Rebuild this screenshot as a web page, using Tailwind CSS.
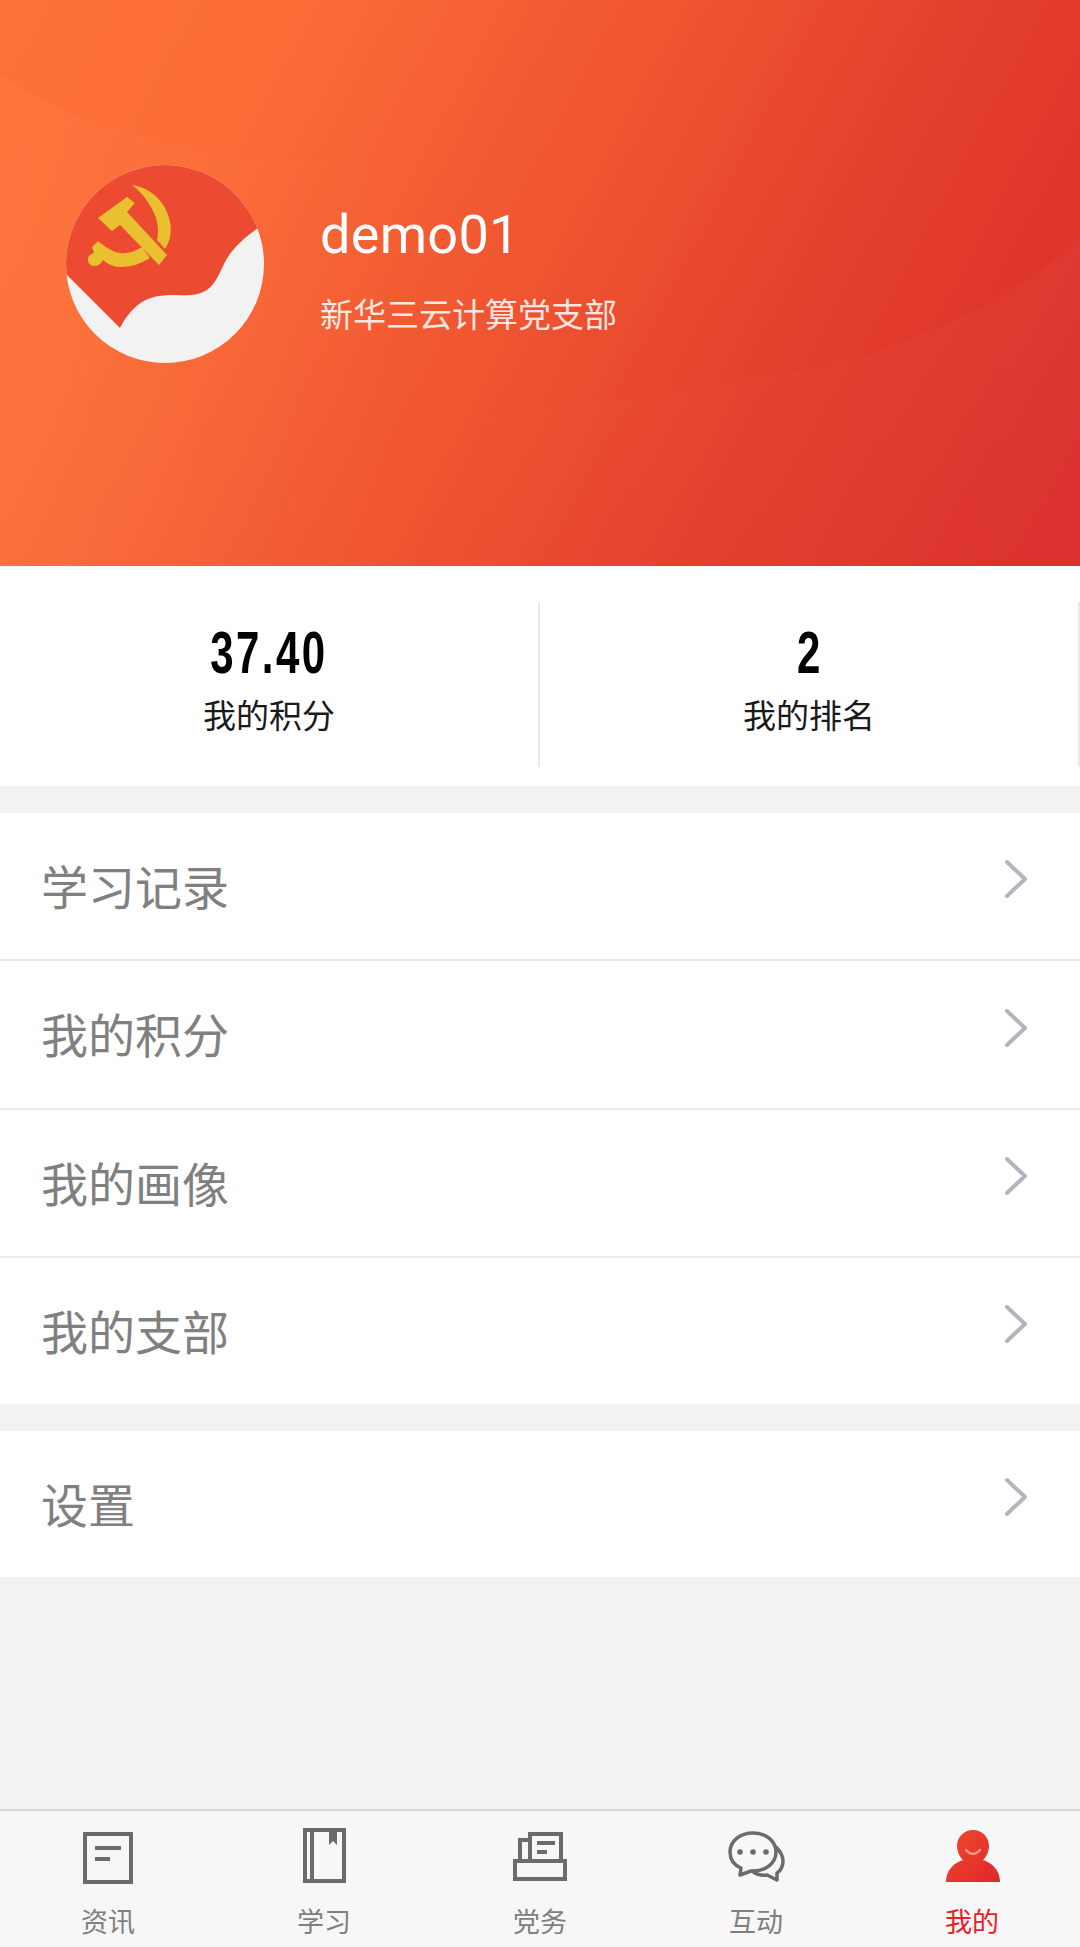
<!DOCTYPE html>
<html lang="zh">
<head>
<meta charset="utf-8">
<script src="https://cdn.jsdelivr.net/npm/@tailwindcss/browser@4"></script>
</head>
<body class="m-0">
<div class="w-[1080px] h-[1947px] flex flex-col bg-[#f2f2f2] overflow-hidden font-['Roboto','Noto_Sans_CJK_SC',sans-serif]">
  <!-- hero -->
  <header class="relative h-[566px] shrink-0 overflow-hidden bg-[linear-gradient(118deg,#fe7238_0%,#fc6d37_20%,#ee5430_50%,#e23c2c_75%,#d92b2a_100%)]">
    <svg class="absolute inset-0" width="1080" height="566" viewBox="0 0 1080 566" fill="none" aria-hidden="true">
      <defs>
        <linearGradient id="w1" x1="0" y1="0" x2="1" y2="0"><stop offset="0" stop-color="#fff" stop-opacity="0.03"/><stop offset="1" stop-color="#fff" stop-opacity="0"/></linearGradient>
        <linearGradient id="w2" x1="0" y1="0" x2="1" y2="0"><stop offset="0" stop-color="#fff" stop-opacity="0"/><stop offset="1" stop-color="#fff" stop-opacity="0.025"/></linearGradient>
      </defs>
      <path d="M0 75C60 115 120 135 172 145C260 165 320 160 420 160V566H0Z" fill="url(#w1)"/>
      <path d="M413 430C600 395 800 380 895 345C970 315 1040 280 1080 236V566H413Z" fill="url(#w2)"/>
    </svg>
    <div class="relative flex items-start gap-[56px] pl-[66px] pt-[165px]">
      <svg class="block shrink-0" width="198" height="198" viewBox="0 0 198 198" role="img" aria-label="党徽头像">
        <defs><clipPath id="av"><circle cx="99" cy="99" r="99"/></clipPath></defs>
        <g clip-path="url(#av)">
          <rect width="198" height="198" fill="#f2f2f3"/>
          <path d="M0 109L54 163C58 155 65 144 76 137C86 131 95 130 110 130C122 131 133 130 141 125C150 118 153 109 158 99C164 86 176 74 192 63L198 0H0Z" fill="#ec4a31"/>
          <path fill="#e9c02f" d="M66 20C78 21 92 30 99 43C104 53 106 62 104 72C103 77 101 80 99 84L91 75C93 66 92 55 87 46C82 35 74 26 66 20Z"/>
          <path fill="#e9c02f" d="M32 53L61 32L69 38L61 47L101 90L93 100L54 60L46 66Z"/>
          <path fill="#e9c02f" d="M32 76C38 81 46 87 54 88C61 89 68 87 76 82L84 93C76 98 66 102 55 102C47 102 42 99 37 95C35 99 32 101 28 101C24 101 21 97 22 93C23 90 25 89 28 88L26 82Z"/>
        </g>
      </svg>
      <div class="text-white mt-[38px]">
        <div class="text-[54px] leading-[64px] tracking-[0.3px]">demo01</div>
        <div class="text-[33px] leading-[48px] mt-[22px] font-['Noto_Sans_CJK_SC',sans-serif] text-white/85">新华三云计算党支部</div>
      </div>
    </div>
  </header>

  <!-- stats -->
  <section class="h-[220px] shrink-0 bg-white flex items-start pt-[36px] font-['Noto_Sans_CJK_SC',sans-serif]">
    <div class="w-[540px] h-[165px] pt-[19px] border-r-2 border-[#e8e8e8] flex flex-col items-center">
      <div class="h-[64px] leading-[64px] text-[60px] font-bold text-black font-['Liberation_Sans',sans-serif] scale-x-[0.7] tracking-[3.5px]">37.40</div>
      <div class="text-[33px] leading-[50px] mt-[4px] text-[#1a1a1a]">我的积分</div>
    </div>
    <div class="w-[540px] h-[165px] pt-[19px] border-r-2 border-[#e8e8e8] flex flex-col items-center">
      <div class="h-[64px] leading-[64px] text-[60px] font-bold text-black font-['Liberation_Sans',sans-serif] scale-x-[0.7]">2</div>
      <div class="text-[33px] leading-[50px] mt-[4px] text-[#1a1a1a]">我的排名</div>
    </div>
  </section>

  <!-- menu 1 -->
  <nav class="mt-[27px] shrink-0 bg-white font-['Noto_Sans_CJK_SC',sans-serif] text-[#808080] text-[47px]">
    <a class="flex items-center justify-between h-[148px] pl-[41px] pr-[52px] pb-[2px] border-b-2 border-[#ececec]"><span>学习记录</span>
      <svg class="mb-[12px]" width="24" height="40" viewBox="0 0 24 40" fill="none" stroke="#b4b4be" stroke-width="4" stroke-linecap="round" stroke-linejoin="round"><path d="M3 3L21 20L3 37"/></svg></a>
    <a class="flex items-center justify-between h-[149px] pl-[41px] pr-[52px] pb-[2px] border-b-2 border-[#ececec]"><span>我的积分</span>
      <svg class="mb-[12px]" width="24" height="40" viewBox="0 0 24 40" fill="none" stroke="#b4b4be" stroke-width="4" stroke-linecap="round" stroke-linejoin="round"><path d="M3 3L21 20L3 37"/></svg></a>
    <a class="flex items-center justify-between h-[148px] pl-[41px] pr-[52px] pb-[2px] border-b-2 border-[#ececec]"><span>我的画像</span>
      <svg class="mb-[12px]" width="24" height="40" viewBox="0 0 24 40" fill="none" stroke="#b4b4be" stroke-width="4" stroke-linecap="round" stroke-linejoin="round"><path d="M3 3L21 20L3 37"/></svg></a>
    <a class="flex items-center justify-between h-[146px] pl-[41px] pr-[52px] pb-[2px]"><span>我的支部</span>
      <svg class="mb-[12px]" width="24" height="40" viewBox="0 0 24 40" fill="none" stroke="#b4b4be" stroke-width="4" stroke-linecap="round" stroke-linejoin="round"><path d="M3 3L21 20L3 37"/></svg></a>
  </nav>

  <!-- menu 2 -->
  <nav class="mt-[27px] shrink-0 bg-white font-['Noto_Sans_CJK_SC',sans-serif] text-[#808080] text-[47px]">
    <a class="flex items-center justify-between h-[146px] pl-[41px] pr-[52px] pb-[2px]"><span>设置</span>
      <svg class="mb-[12px]" width="24" height="40" viewBox="0 0 24 40" fill="none" stroke="#b4b4be" stroke-width="4" stroke-linecap="round" stroke-linejoin="round"><path d="M3 3L21 20L3 37"/></svg></a>
  </nav>

  <div class="flex-1"></div>

  <!-- tab bar -->
  <footer class="h-[136px] mb-[2px] shrink-0 bg-[#f7f7f7] border-t-2 border-[#d6d6d6] grid grid-cols-5 font-['Noto_Sans_CJK_SC',sans-serif] text-[27px] text-[#808080]">
    <div class="flex flex-col items-center pt-[16px]">
      <svg width="58" height="58" viewBox="0 0 58 58" fill="none" stroke="#6b6b6b" stroke-width="4"><rect x="6" y="7" width="46" height="48"/><path d="M16 21H42M16 32H31"/></svg>
      <span class="leading-[38px] mt-[17px]">资讯</span>
    </div>
    <div class="flex flex-col items-center pt-[16px]">
      <svg width="58" height="58" viewBox="0 0 58 58" fill="none" stroke="#6b6b6b" stroke-width="4"><rect x="10" y="3" width="39" height="51"/><path d="M17 3V54"/><path d="M34 3H42V18L38 14L34 18Z" fill="#6b6b6b" stroke="none"/></svg>
      <span class="leading-[38px] mt-[17px]">学习</span>
    </div>
    <div class="flex flex-col items-center pt-[16px]">
      <svg width="58" height="58" viewBox="0 0 58 58" fill="none" stroke="#6b6b6b" stroke-width="4"><rect x="4" y="34" width="50" height="18"/><path d="M19 33V7H50V33"/><path d="M19 13H9V33"/><path d="M26 16H44M26 25H36"/></svg>
      <span class="leading-[38px] mt-[17px]">党务</span>
    </div>
    <div class="flex flex-col items-center pt-[16px]">
      <svg width="58" height="58" viewBox="0 0 58 58" fill="none" stroke="#6b6b6b" stroke-width="3.5" stroke-linejoin="round"><path d="M26 6C13 6 3 14 3 25C3 32 7 38 14 41L13 48L24 44C25 44 25 44 26 44C39 44 49 36 49 25C49 14 39 6 26 6Z"/><path d="M49 20C53 24 56 29 56 34C56 40 53 44 50 46L50 53L40 48C34 49 29 47 25 44"/><circle cx="13" cy="25" r="2.8" fill="#6b6b6b" stroke="none"/><circle cx="26" cy="25" r="2.8" fill="#6b6b6b" stroke="none"/><circle cx="39" cy="25" r="2.8" fill="#6b6b6b" stroke="none"/></svg>
      <span class="leading-[38px] mt-[17px]">互动</span>
    </div>
    <div class="flex flex-col items-center pt-[16px] text-[#e8202a]">
      <svg width="58" height="58" viewBox="0 0 58 58"><defs><linearGradient id="pg" x1="0" y1="0" x2="1" y2="1"><stop offset="0" stop-color="#ee4a2c"/><stop offset="1" stop-color="#e0262a"/></linearGradient></defs><path fill="url(#pg)" d="M30 3C39 3 46 10 46 19C46 25 43 30 40 33C49 36 57 43 57 55H3C3 43 11 36 20 33C17 30 14 25 14 19C14 10 21 3 30 3Z"/><path d="M23 23C27 28 33 28 37 23" fill="none" stroke="#f59a7c" stroke-width="2.5" stroke-linecap="round"/></svg>
      <span class="leading-[38px] mt-[17px]">我的</span>
    </div>
  </footer>
</div>
</body>
</html>
